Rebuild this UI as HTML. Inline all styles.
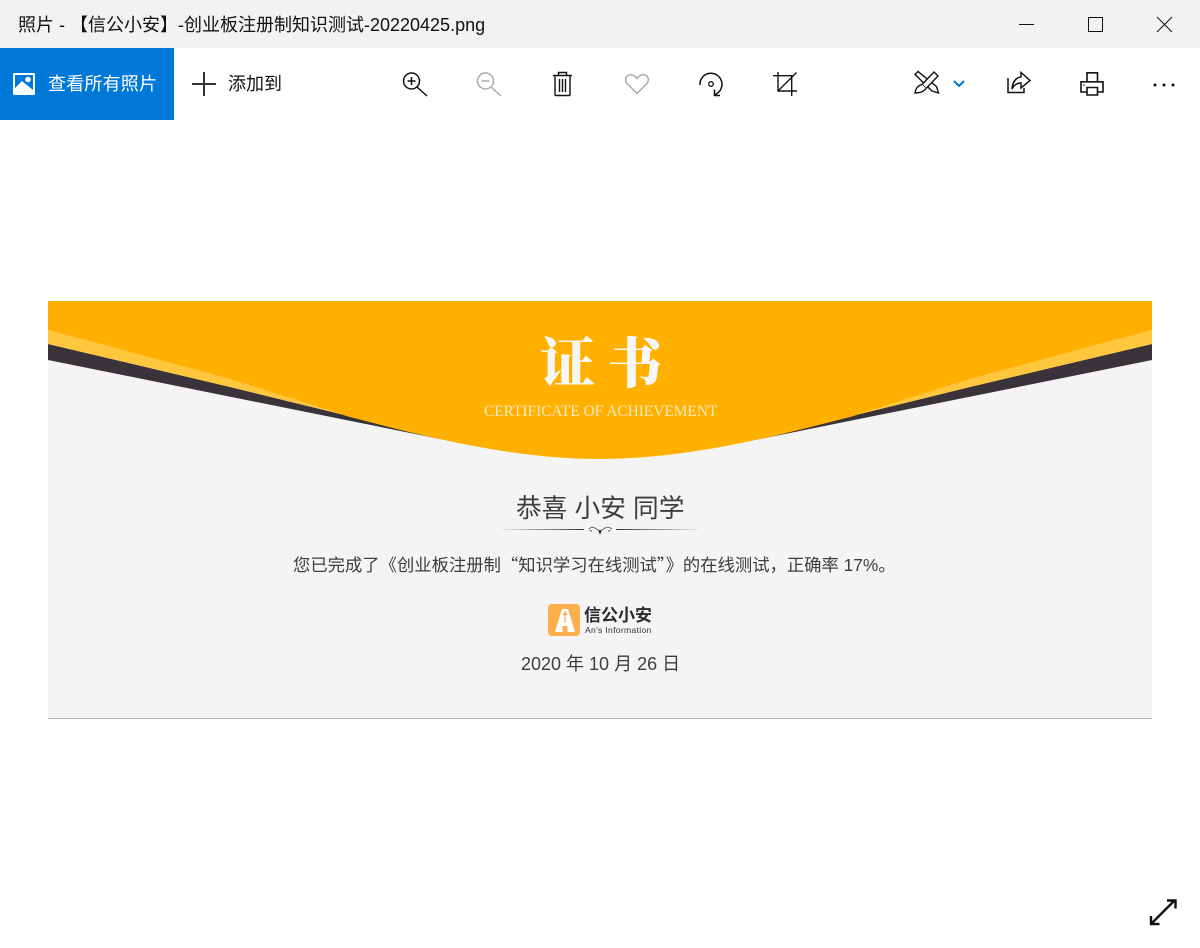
<!DOCTYPE html>
<html lang="zh-CN"><head><meta charset="utf-8"><title>照片</title>
<style>
html,body{margin:0;padding:0;background:#fff}
body{width:1200px;height:948px;position:relative;overflow:hidden;font-family:"Liberation Sans","Noto Sans CJK SC",sans-serif}
.t{position:absolute;white-space:nowrap;line-height:1}
.q{font-family:"Noto Sans CJK SC",sans-serif}
svg{position:absolute;left:0;top:0}
</style></head><body>
<div style="position:absolute;left:0;top:0;width:1200px;height:48px;background:#f2f2f2"></div>
<div style="position:absolute;left:0;top:48px;width:174px;height:72px;background:#0078d7"></div>
<div class="t" style="left:18px;top:16px;font-size:18px;color:#111">照片 - 【信公小安】-创业板注册制知识测试-20220425.png</div>
<div class="t" style="left:48px;top:75px;font-size:18px;letter-spacing:.2px;color:#fff">查看所有照片</div>
<div class="t" style="left:228px;top:75px;font-size:18px;color:#111">添加到</div>

<svg width="1200" height="948" viewBox="0 0 1200 948" fill="none">
<defs>
<linearGradient id="gl" x1="0" x2="1" y1="0" y2="0"><stop offset="0" stop-color="#444" stop-opacity=".1"/><stop offset="1" stop-color="#333"/></linearGradient>
<linearGradient id="gr" x1="0" x2="1" y1="0" y2="0"><stop offset="0" stop-color="#333"/><stop offset="1" stop-color="#444" stop-opacity=".1"/></linearGradient>
</defs>
<!-- certificate -->
<rect x="48" y="301" width="1104" height="417" fill="#f4f4f4"/>
<rect x="48" y="718" width="1104" height="1" fill="#b4b4b4"/>
<path d="M48 344L230 387L450 441H750L970 387L1152 344V360L750 441H450L48 360Z" fill="#3a3339"/>
<path d="M48 330L230 379L350 417H850L970 379L1152 330V344L970 387L750 441H450L230 387L48 344Z" fill="#ffc73e"/>
<path d="M48 301H1152V330L970 379L850 417C780 435 690 459 600 459C510 459 420 435 350 417L230 379L48 330Z" fill="#ffb000"/>
<!-- ornament -->
<rect x="502" y="529" width="82" height="1" fill="url(#gl)"/>
<rect x="616" y="529" width="82" height="1" fill="url(#gr)"/>
<path d="M589 529q3-3 6-1t5 3q2-1 5-3t7 1M592 531q-2 0-2-1M608 531q2 0 2-1" stroke="#555" stroke-width=".9"/>
<path d="M598 530h4l-2 5z" fill="#333"/>
<!-- logo -->
<rect x="548" y="604" width="32" height="32" rx="4" fill="#ffae4d"/>
<path d="M562 609H568L575 632H555Z" fill="#fff"/>
<path d="M565 611V623M563 615L565 613L567 615" stroke="#ffae4d" stroke-width="1.300"/>
<rect x="562.500" y="626" width="5" height="6" fill="#ffae4d"/>
<!-- window controls -->
<path d="M1019 24.500H1034" stroke="#111"/>
<rect x="1088.500" y="17.500" width="14" height="14" stroke="#111"/>
<path d="M1157 17L1172 32M1172 17L1157 32" stroke="#111"/>
<!-- image icon -->
<rect x="13" y="73" width="22" height="22" rx="1" fill="#fff"/>
<rect x="15" y="75" width="18" height="18" fill="#0078d7"/>
<circle cx="28" cy="79.500" r="2.800" fill="#fff"/>
<path d="M15 88L22 81L33 90V93H15Z" fill="#fff"/>
<!-- plus -->
<path d="M204 72V96M192 84H216" stroke="#333" stroke-width="2"/>
<!-- zoom in -->
<circle cx="411.500" cy="81" r="8" stroke="#111" stroke-width="1.500"/>
<path d="M407.500 81H415.500M411.500 77V85M417 87L427 96" stroke="#111" stroke-width="1.500"/>
<!-- zoom out -->
<circle cx="485.500" cy="81" r="8" stroke="#aaa" stroke-width="1.500"/>
<path d="M481.500 81H489.500M491 87L501 96" stroke="#aaa" stroke-width="1.500"/>
<!-- trash -->
<path d="M553 75.500H572M555 75.500V94.500Q555 95.500 556 95.500H569Q570 95.500 570 94.500V75.500M558.500 75.500V72.500H566.500V75.500M559.500 79V92M562.500 79V92M565.500 79V92" stroke="#111" stroke-width="1.400"/>
<!-- heart -->
<path d="M637 93.500L627 83.500C622 76 632 71 637 78.500C642 71 652 76 647 83.500Z" stroke="#aaa" stroke-width="1.500"/>
<!-- rotate -->
<path d="M700 85A11 11 0 1 1 715 94.500" stroke="#111" stroke-width="1.500"/>
<circle cx="711" cy="84" r="2.300" stroke="#111" stroke-width="1.300"/>
<path d="M714.500 89.500V95.500H720" stroke="#111" stroke-width="1.500"/>
<!-- crop -->
<path d="M773 75.700H791.700V96M778 72V91H797M778 91L796.500 72.500" stroke="#111" stroke-width="1.400"/>
<!-- draw -->
<path d="M918 71.500L915 74.500L932 91L938.500 93L936.500 86.500Z" stroke="#111" stroke-width="1.400"/>
<path d="M934 72L938 76L926 88.500L922 84.500Z" fill="#fff" stroke="#111" stroke-width="1.400"/>
<path d="M922 84.500Q916 86 915 93Q923 93 926 88.500" fill="#fff" stroke="#111" stroke-width="1.400"/>
<path d="M954 81L959 86L964 81" stroke="#0078d7" stroke-width="2"/>
<!-- share -->
<path d="M1008 78V92.500H1024V88M1012 89Q1013 78 1021 77V72.500L1030 80.500L1021 88V83Q1015 83 1012 89Z" stroke="#111" stroke-width="1.500"/>
<!-- print -->
<path d="M1087 81.500V72.800H1097.500V81.500M1087 92H1081V81.800H1103V92H1097.500M1087 87.500H1097.500V95H1087Z" stroke="#111" stroke-width="1.600"/>
<circle cx="1084" cy="85" r=".8" fill="#111"/>
<!-- more -->
<circle cx="1155" cy="85" r="1.500" fill="#111"/><circle cx="1164" cy="85" r="1.500" fill="#111"/><circle cx="1173" cy="85" r="1.500" fill="#111"/>
<!-- expand -->
<path d="M1152 923L1174.500 900.500M1167 900.500H1175.500V908.500M1151 916V924H1159.500" stroke="#111" stroke-width="2.400"/>
</svg>

<div class="t" style="left:540px;top:332px;font-size:55px;font-weight:900;color:#f6f6f6;font-family:'Noto Serif CJK SC',serif;letter-spacing:12px;">证书</div>
<div class="t" style="left:484px;top:404px;font-size:15.400px;color:#fbe9c0;font-family:'Liberation Serif',serif;">CERTIFICATE OF ACHIEVEMENT</div>
<div class="t" style="left:516px;top:497px;font-size:25.700px;color:#3d3d3d">恭喜 小安 同学</div>
<div class="t" style="left:293px;top:555px;font-size:17.330px;color:#3d3d3d;">您已完成了《创业板注册制<span class="q">“</span>知识学习在线测试<span class="q">”</span>》的在线测试，正确率 17%。</div>
<div class="t" style="left:584px;top:607px;font-size:17px;font-weight:bold;color:#2c2c2c">信公小安</div>
<div class="t" style="left:585px;top:626px;font-size:8.600px;color:#333;letter-spacing:.3px">An's Information</div>
<div class="t" style="left:521px;top:655px;font-size:18px;color:#3d3d3d">2020 年 10 月 26 日</div>
</body></html>
